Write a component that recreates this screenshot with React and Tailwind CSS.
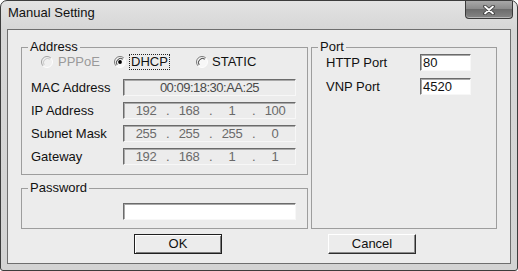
import React from "react";

const sunken =
  "border border-t-[#6b6b6b] border-l-[#6b6b6b] border-r-[#f7f7f7] border-b-[#f7f7f7] shadow-[inset_1px_1px_0_#a9a9a9]";

const Radio = ({ checked, disabled }) => (
  <svg width="12" height="12" viewBox="0 0 12 12" className="shrink-0">
    <circle cx="6" cy="6" r="5.5" fill={disabled ? "#f0f0f0" : "#f7f7f7"} />
    <path d="M9.9 2.1 A5.5 5.5 0 0 0 2.1 9.9" stroke={disabled ? "#a3a3a3" : "#7a7a7a"} fill="none" />
    <path d="M9.9 2.1 A5.5 5.5 0 0 1 2.1 9.9" stroke="#fdfdfd" fill="none" />
    <path d="M8.9 3.1 A4.2 4.2 0 0 0 3.1 8.9" stroke={disabled ? "#c8c8c8" : "#404040"} fill="none" />
    {checked && <circle cx="6" cy="6" r="1.9" fill="#000" />}
  </svg>
);

const IpField = ({ parts }) => (
  <div className={`flex h-[17px] w-[173px] items-center bg-[#ececec] pl-[3px] text-[#6a6a6a] tracking-[-0.4px] ${sunken}`}>
    {parts.map((p, i) => (
      <React.Fragment key={i}>
        {i > 0 && <span className="w-[5px] text-center">.</span>}
        <span className="w-[38px] text-center">{p}</span>
      </React.Fragment>
    ))}
  </div>
);

const Group = ({ label, className, children }) => (
  <fieldset className={`border border-[#9d9d9d] ${className}`}>
    <legend className="ml-[6px] px-[2px] leading-[14px]">{label}</legend>
    {children}
  </fieldset>
);

const Row = ({ label, children }) => (
  <div className="flex h-[17px] items-center pl-[9px]">
    <span className="w-[92px]">{label}</span>
    {children}
  </div>
);

export default function App() {
  return (
    <div className="h-[271px] w-[518px] font-['Liberation_Sans',sans-serif] text-[13px] leading-[14px] text-[#111]">
      <div className="flex h-full w-full flex-col rounded-t-[7px] rounded-b-[3px] border border-[#3c3c3c] bg-[linear-gradient(#e3e3e3,#d6d6d6_28px,#d3d3d3)]">
        {/* title bar */}
        <div className="flex h-[28px] items-start">
          <span className="pl-[7px] pt-[5px]">Manual Setting</span>
          <button className="ml-auto mr-[4px] flex h-[18px] w-[48px] items-center justify-center rounded-b-[4px] border border-t-0 border-[#3a3a3a] bg-[linear-gradient(#a8a8a8,#8c8c8c_45%,#6c6c6c_50%,#858585)] shadow-[inset_0_-1px_0_#b5b5b5]">
            <svg width="14" height="10" viewBox="0 0 14 10">
              <path d="M3 1.5 L11 8.5 M11 1.5 L3 8.5" stroke="#3a3a3a" strokeWidth="3.6" strokeLinecap="round" />
              <path d="M3 1.5 L11 8.5 M11 1.5 L3 8.5" stroke="#ffffff" strokeWidth="1.8" strokeLinecap="round" />
            </svg>
          </button>
        </div>

        {/* client area */}
        <div className="ml-[6px] h-[235px] w-[504px] border border-[#6e6e6e] bg-[#ececec] px-[13px] pt-[10px]">
          <div className="flex gap-[3px]">
            <div className="flex w-[287px] flex-col gap-[6px]">
              <Group label="Address" className="h-[135px]">
                <div className="flex h-[16px] items-center pl-[19px]">
                  <div className="flex w-[73px] items-center gap-[5px] text-[#9a9a9a]">
                    <Radio disabled />
                    <span>PPPoE</span>
                  </div>
                  <div className="flex w-[82px] items-center gap-[3px]">
                    <Radio checked />
                    <span className="border border-dotted border-[#222] px-[1px] leading-[14px]">DHCP</span>
                  </div>
                  <div className="flex items-center gap-[4px]">
                    <Radio />
                    <span>STATIC</span>
                  </div>
                </div>
                <div className="mt-[9px] flex flex-col gap-[6px]">
                  <Row label="MAC Address">
                    <div className={`flex h-[17px] w-[173px] items-center justify-center bg-[#ececec] text-[#4a4a4a] tracking-[-0.5px] ${sunken}`}>
                      00:09:18:30:AA:25
                    </div>
                  </Row>
                  <Row label="IP Address">
                    <IpField parts={["192", "168", "1", "100"]} />
                  </Row>
                  <Row label="Subnet Mask">
                    <IpField parts={["255", "255", "255", "0"]} />
                  </Row>
                  <Row label="Gateway">
                    <IpField parts={["192", "168", "1", "1"]} />
                  </Row>
                </div>
              </Group>
              <Group label="Password" className="h-[48px]">
                <div className={`ml-[101px] mt-[8px] h-[17px] w-[173px] bg-white ${sunken}`} />
              </Group>
            </div>

            <Group label="Port" className="h-[189px] w-[186px]">
              <div className="flex flex-col gap-[7px]">
                <div className="flex h-[17px] items-center pl-[14px]">
                  <span className="w-[94px]">HTTP Port</span>
                  <div className={`flex h-[17px] w-[51px] items-center bg-white pl-[2px] ${sunken}`}>80</div>
                </div>
                <div className="flex h-[17px] items-center pl-[14px]">
                  <span className="w-[94px]">VNP Port</span>
                  <div className={`flex h-[17px] w-[51px] items-center bg-white pl-[2px] ${sunken}`}>4520</div>
                </div>
              </div>
            </Group>
          </div>

          <div className="mt-[5px] flex gap-[106px] pl-[113px]">
            <button className="h-[20px] w-[88px] border border-[#202020] bg-[#ececec] shadow-[inset_1px_1px_0_#ffffff,inset_-1px_-1px_0_#7c7c7c]">
              OK
            </button>
            <button className="h-[20px] w-[88px] border border-t-white border-l-white border-r-[#2e2e2e] border-b-[#2e2e2e] bg-[#ececec] shadow-[inset_-1px_-1px_0_#8c8c8c]">
              Cancel
            </button>
          </div>
        </div>
      </div>
    </div>
  );
}
